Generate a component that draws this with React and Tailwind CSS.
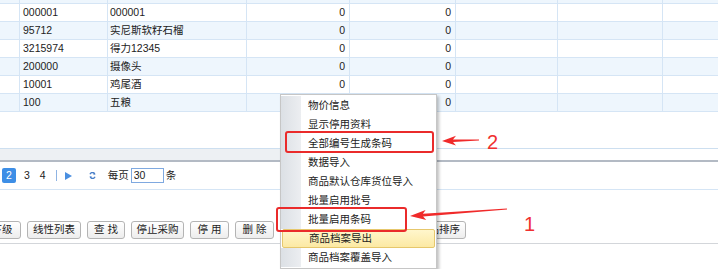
import * as React from "react";

const rows = [
  { code: "000001", name: "000001" },
  { code: "95712", name: "实尼斯软籽石榴" },
  { code: "3215974", name: "得力12345" },
  { code: "200000", name: "摄像头" },
  { code: "10001", name: "鸡尾酒" },
  { code: "100", name: "五粮" },
];

const menuItems = [
  "物价信息",
  "显示停用资料",
  "全部编号生成条码",
  "数据导入",
  "商品默认仓库货位导入",
  "批量启用批号",
  "批量启用条码",
  "商品档案导出",
  "商品档案覆盖导入",
];

const buttons = [
  { label: "下级", w: "w-[38px]", extra: "-ml-[17px]" },
  { label: "线性列表", w: "w-[54px]" },
  { label: "查 找", w: "w-[38px]" },
  { label: "停止采购", w: "w-[53px]" },
  { label: "停 用", w: "w-[39px]" },
  { label: "删 除", w: "w-[39px]" },
  { label: "更 多", w: "w-[40px]" },
  { label: "商品排序", w: "w-[54px]", extra: "ml-[86px]" },
];

function GridRow({ row, striped, partial }) {
  const bg = striped ? "bg-[#eef6fd]" : "bg-white";
  const h = partial ? "h-[4px]" : "h-[18px]";
  const cell = "h-full border-r border-[#d5e5f5] flex items-center";
  return (
    <div className={`flex ${h} ${bg} border-b border-[#d5e5f5]`}>
      <div className={`${cell} w-[20px]`} />
      <div className={`${cell} w-[88px] pl-[3px]`}>{row?.code}</div>
      <div className={`${cell} w-[139px] pl-[2px]`}>{row?.name}</div>
      <div className={`${cell} w-[103px] justify-end pr-[4px]`}>{row ? "0" : ""}</div>
      <div className={`${cell} w-[106px] justify-end pr-[4px]`}>{row ? "0" : ""}</div>
      <div className={`${cell} w-[102px]`} />
      <div className={`${cell} w-[105px]`} />
      <div className="h-full flex-1" />
    </div>
  );
}

function Pager() {
  return (
    <div className="flex h-[28px] items-center border-b border-[#d5e5f5] text-[#222]">
      <div className="ml-[2px] flex h-[15px] w-[14px] items-center justify-center rounded-[2px] bg-[#3d8ee6] text-white">
        2
      </div>
      <span className="ml-[8px]">3</span>
      <span className="ml-[10px]">4</span>
      <div className="ml-[10px] h-[11px] w-px bg-[#8fb4e3]" />
      <svg width="8" height="8" viewBox="0 0 8 8" className="ml-[8px]">
        <polygon points="0,0 7,4 0,8" fill="#4a8fe0" />
      </svg>
      <svg width="7" height="7" viewBox="0 0 7 7" className="ml-[16px]">
        <path d="M1 2.2 A2.6 2.6 0 0 1 5.8 2" stroke="#4a7fc8" strokeWidth="1.3" fill="none" />
        <path d="M6 4.8 A2.6 2.6 0 0 1 1.2 5" stroke="#4a7fc8" strokeWidth="1.3" fill="none" />
        <polygon points="4.6,0.6 6.6,2.4 4.4,2.8" fill="#4a7fc8" />
        <polygon points="2.4,6.4 0.4,4.6 2.6,4.2" fill="#4a7fc8" />
      </svg>
      <span className="ml-[12px]">每页</span>
      <div className="ml-[2px] flex h-[15px] w-[33px] items-center border border-[#7fa9e0] pl-[2px]">30</div>
      <span className="ml-[2px]">条</span>
    </div>
  );
}

function ContextMenu() {
  return (
    <div className="absolute left-[280px] top-[94px] w-[157px] border border-[#c6c6c6] bg-white py-px shadow-[2px_2px_3px_rgba(0,0,0,0.25)]">
      {menuItems.map((item) =>
        item === "商品档案导出" ? (
          <div key={item} className="mx-px flex h-[19px] items-center rounded-[2px] border border-[#e6c76c] bg-gradient-to-b from-[#fff6cc] to-[#fce9a3] pl-[26px]">
            {item}
          </div>
        ) : (
          <div key={item} className="flex h-[19px] items-center">
            <div className="h-full w-[21px] border-r border-white bg-gradient-to-r from-[#dce0e5] to-[#eceef1]" />
            <span className="pl-[6px]">{item}</span>
          </div>
        )
      )}
    </div>
  );
}

function Annotations() {
  return (
    <>
      <div className="absolute left-[285px] top-[131px] h-[22px] w-[149px] rounded-[3px] border-2 border-[#ea2b2b]" />
      <div className="absolute left-[276px] top-[207px] h-[25px] w-[131px] rounded-[3px] border-2 border-[#ea2b2b]" />
      <svg className="absolute left-0 top-0" width="718" height="269" viewBox="0 0 718 269">
        <polygon
          points="442,141 456,135.8 453,139.5 479,139.6 479,140.4 453,141.9 456,145.6"
          fill="#f02a2a"
        />
        <polygon
          points="410,216 425.6,209.9 422.9,213.8 506.9,208.6 507.1,209.4 423.1,216.4 426.3,220"
          fill="#f02a2a"
        />
      </svg>
      <span className="absolute left-[487px] top-[132px] text-[20px] leading-[20px] text-[#f0302f] [font-family:'Liberation_Sans',sans-serif]">
        2
      </span>
      <span className="absolute left-[524px] top-[214px] text-[20px] leading-[20px] text-[#f0302f] [font-family:'Liberation_Sans',sans-serif]">
        1
      </span>
    </>
  );
}

export default function App() {
  return (
    <div className="relative h-[269px] w-[718px] overflow-hidden bg-white text-[10.5px] text-[#222] [font-family:'Liberation_Sans','Noto_Sans_CJK_SC',sans-serif]">
      <div className="flex flex-col">
        <GridRow striped partial />
        {rows.map((r, i) => (
          <GridRow key={r.code} row={r} striped={i % 2 === 1} />
        ))}
        <div className="h-[36px]" />
        <div className="h-[14px] border-t border-b-2 border-t-[#cddff0] border-b-[#b3bac4]">
          <div className="h-full w-[340px] bg-[#edf0f3]" />
        </div>
        <Pager />
        <div className="h-[31px]" />
        <div className="flex h-[18px] gap-[6px]">
          {buttons.map((b) => (
            <div
              key={b.label}
              className={`${b.w} ${b.extra || ""} flex shrink-0 items-center justify-center whitespace-pre rounded-[3px] border border-[#b4b4b4] bg-gradient-to-b from-white to-[#ededed] text-[#222]`}
            >
              {b.label}
            </div>
          ))}
        </div>
        <div className="h-[4px]" />
        <div className="h-px bg-[#d3d6da]" />
      </div>
      <ContextMenu />
      <Annotations />
    </div>
  );
}
